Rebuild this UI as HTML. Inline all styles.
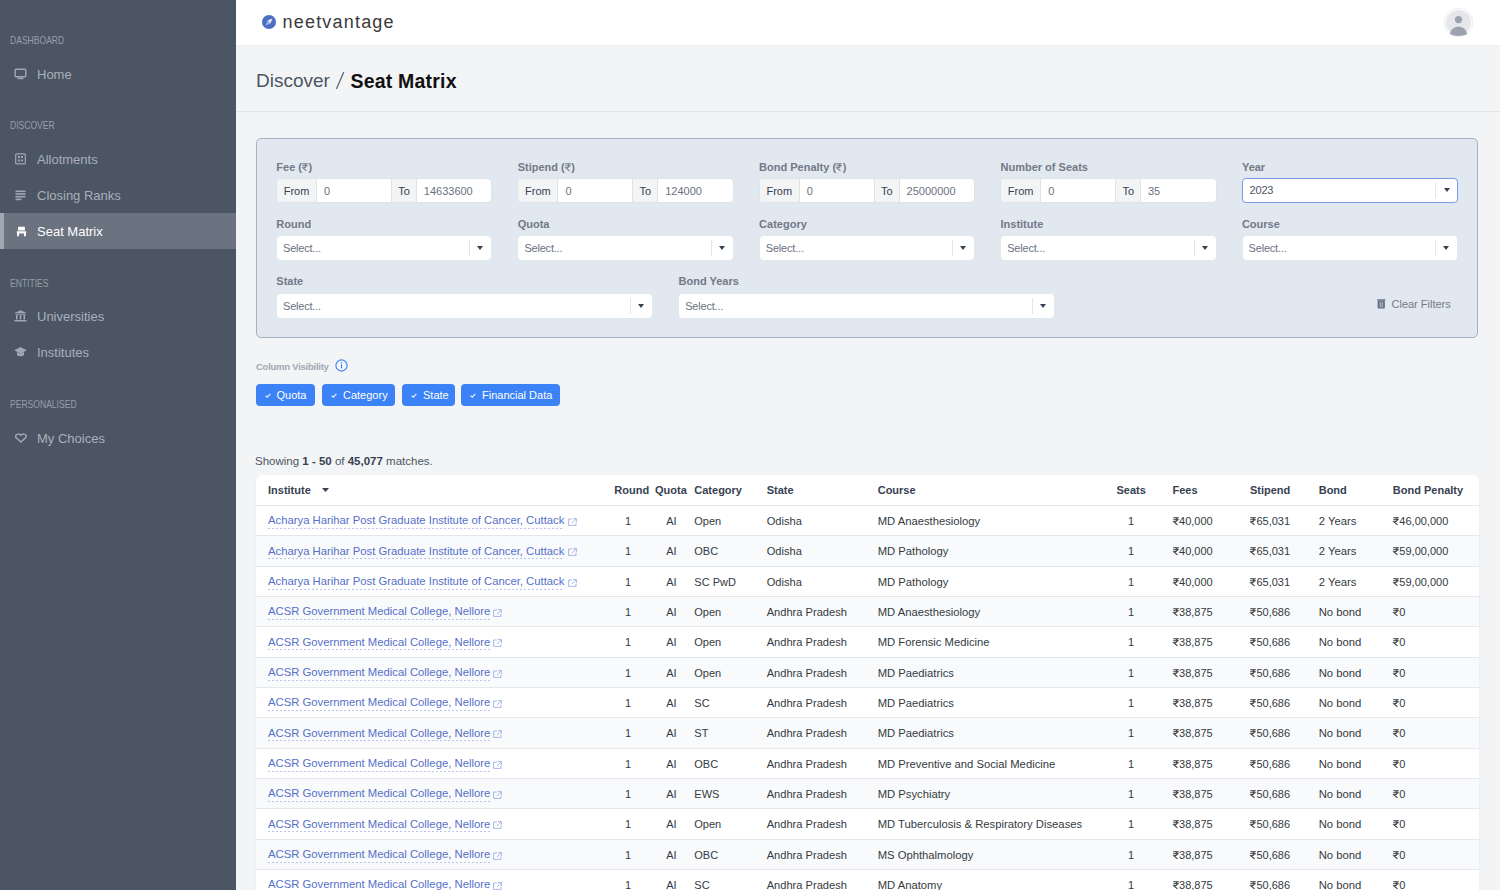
<!DOCTYPE html>
<html><head><meta charset="utf-8"><title>Seat Matrix</title>
<style>
*{box-sizing:border-box;margin:0;padding:0}
html,body{width:1500px;height:890px;overflow:hidden;background:#f3f4f6;font-family:"Liberation Sans",sans-serif;color:#1f2937}
.abs{position:absolute}
svg.r{display:inline-block;width:0.55em;height:0.72em;vertical-align:baseline;margin-right:0.5px;overflow:visible}
/* sidebar */
#sb{position:absolute;left:0;top:0;width:236px;height:890px;background:#4b5563}
.sec{position:absolute;left:9.7px;font-size:10.2px;letter-spacing:0px;transform:scaleX(0.84);transform-origin:0 0;white-space:nowrap;color:#979eaa;line-height:12px;height:12px}
.it{position:absolute;left:0;width:236px;height:36px;color:#a9b0bb;font-size:13px;line-height:36px}
.it .tx{position:absolute;left:37px;top:0.7px}
.it svg{position:absolute;left:14px;top:12px;width:13px;height:12px;color:#a0a8b3}
.it.act svg{color:#fff}
.it.act{background:#6b7280;color:#fff}
.it.act:before{content:"";position:absolute;left:0;top:0;width:4px;height:36px;background:#a1a8b3}
/* header */
#hd{position:absolute;left:236px;top:0;width:1264px;height:45px;background:#fff;box-shadow:0 1px 2px rgba(0,0,0,.035)}
#bc{position:absolute;left:236px;top:45px;width:1264px;height:67px;border-bottom:1px solid #e3e5e9}
/* panel */
#pn{position:absolute;left:256px;top:138px;width:1222px;height:200px;background:#e2e8f0;border:1px solid #a6b1c1;border-radius:5px}
.lb{position:absolute;font-size:11px;font-weight:bold;color:#717a88;line-height:13px;margin-left:-0.7px}
.ig{position:absolute;height:23.5px;background:#fff;border-radius:4px;box-shadow:0 0 0 0.5px #d9dee5;overflow:hidden;font-size:11px;line-height:24.6px;color:#6b7280}
.ig .ad{position:absolute;top:0;height:23.5px;background:#f3f4f6;color:#374151;text-align:center;border-left:1px solid #dfe2e6;border-right:1px solid #dfe2e6}
.ig .v{position:absolute;top:0}
.sel{position:absolute;height:24px;background:#fff;border-radius:4px;font-size:11px;line-height:24px;color:#6b7280}
.sel .ph{position:absolute;left:6px;top:0.3px;letter-spacing:-0.2px}
.sel .sp{position:absolute;right:21px;top:4px;width:1px;height:16px;background:#e5e7eb}
.sel .ar{position:absolute;right:8px;top:10px;width:0;height:0;border-left:3.5px solid transparent;border-right:3.5px solid transparent;border-top:4px solid #374151}
/* buttons */
.btn{position:absolute;top:384px;height:22px;background:#3b82f6;border-radius:4px;color:#fff;font-size:11px;line-height:22px}
/* table */
#tb{position:absolute;left:256px;top:475px;width:1223px;height:430px;background:#fff;border-radius:6px 6px 0 0;overflow:hidden;box-shadow:0 1px 3px rgba(0,0,0,.05)}
.row{position:absolute;left:0;width:1223px;height:30.333px;font-size:11px;color:#343a42;border-bottom:1px solid #e5e7eb}
.row.alt{background:#f9fafb}
.row span{position:absolute;top:0;line-height:30.8px;white-space:nowrap}
.hdr span{font-weight:bold;color:#374151;top:0.3px}
.row .lk{color:#5570c8;font-size:11.3px;top:-0.6px}
.row .lk u{text-decoration:none;line-height:13.5px;display:inline-block;padding-bottom:1px;background:linear-gradient(to right,#b9c5ec 45%,transparent 45%) 0 100%/4px 1px repeat-x}
.c{text-align:center}

svg.ext{display:inline-block;vertical-align:-1.5px;margin-left:0px}
</style></head>
<body>
<div id="sb">
<div class="sec" style="top:35.1px">DASHBOARD</div>
<div class="sec" style="top:120.1px">DISCOVER</div>
<div class="sec" style="top:277.9px">ENTITIES</div>
<div class="sec" style="top:399.2px">PERSONALISED</div>
<div class="it" style="top:56px"><svg viewBox="0 0 13 12"><rect x="1.2" y="1.2" width="10.6" height="7.6" rx="1" fill="none" stroke="currentColor" stroke-width="1.4"/><rect x="3.5" y="9.6" width="6" height="1.6" fill="currentColor"/></svg><span class="tx">Home</span></div>
<div class="it" style="top:141px"><svg viewBox="0 0 13 12"><rect x="1.7" y="0.9" width="9.6" height="10" rx="1" fill="none" stroke="currentColor" stroke-width="1.2"/><rect x="4" y="3" width="2" height="2" fill="currentColor"/><rect x="7" y="3" width="2" height="2" fill="currentColor"/><rect x="4" y="6.5" width="2" height="2" fill="currentColor"/><rect x="7" y="6.5" width="2" height="2" fill="currentColor"/></svg><span class="tx">Allotments</span></div>
<div class="it" style="top:177px"><svg viewBox="0 0 13 12"><rect x="1.5" y="1.5" width="10" height="1.6" fill="currentColor"/><rect x="1.5" y="4.2" width="10" height="1.6" fill="currentColor"/><rect x="1.5" y="6.9" width="10" height="1.6" fill="currentColor"/><rect x="1.5" y="9.6" width="6" height="1.6" fill="currentColor"/></svg><span class="tx">Closing Ranks</span></div>
<div class="it act" style="top:213px"><svg viewBox="0 0 13 12" style="left:15.5px;top:13px;width:11px;height:11px"><path d="M3.2 0.3H9.8Q10.6 0.3 10.6 1.1V4.8H2.4V1.1Q2.4 0.3 3.2 0.3Z M1 5.6H12V8.4H1Z M1.3 8.4H3.6V11.6H1.3Z M9.4 8.4H11.7V11.6H9.4Z" fill="currentColor"/></svg><span class="tx">Seat Matrix</span></div>
<div class="it" style="top:298px"><svg viewBox="0 0 13 12"><path d="M6.5 0.3L12.5 3H0.5Z" fill="currentColor"/><rect x="1" y="3.6" width="11" height="1" fill="currentColor"/><rect x="2" y="5" width="1.5" height="4.5" fill="currentColor"/><rect x="5.75" y="5" width="1.5" height="4.5" fill="currentColor"/><rect x="9.5" y="5" width="1.5" height="4.5" fill="currentColor"/><rect x="0.5" y="10" width="12" height="1.5" fill="currentColor"/></svg><span class="tx">Universities</span></div>
<div class="it" style="top:334px"><svg viewBox="0 0 13 12"><path d="M6.5 1L12.8 4.2L6.5 7.4L0.2 4.2Z" fill="currentColor"/><path d="M3 6V9C4.5 10.8 8.5 10.8 10 9V6L6.5 7.8Z" fill="currentColor"/></svg><span class="tx">Institutes</span></div>
<div class="it" style="top:420px"><svg viewBox="0 0 13 12" preserveAspectRatio="none" style="left:15px;top:13px;width:11.8px;height:10px"><path d="M6.5 10.8L1.6 6C0 4.4 0.6 1.5 3.2 1.2C4.6 1 5.8 1.8 6.5 2.8C7.2 1.8 8.4 1 9.8 1.2C12.4 1.5 13 4.4 11.4 6Z" fill="none" stroke="currentColor" stroke-width="1.7"/></svg><span class="tx">My Choices</span></div>
</div>
<div id="hd"></div><svg class="abs" style="left:262px;top:15px" width="14" height="14" viewBox="0 0 14 14"><circle cx="7" cy="7" r="7" fill="#4a6fc4"/><path d="M10.5 3.5L8.4 8.4 5.6 5.6Z" fill="#eef3fb"/><path d="M3.5 10.5L5.6 5.6 8.4 8.4Z" fill="#9fb7e6"/></svg><div class="abs" style="left:282.5px;top:8.5px;font-size:18px;letter-spacing:1.2px;color:#3a3a3a;line-height:26px">neetvantage</div><svg class="abs" style="left:1443px;top:7px" width="30" height="30" viewBox="0 0 30 30"><circle cx="15.5" cy="15.5" r="14.3" fill="#fff" stroke="#e9ebee" stroke-width="0.9"/><circle cx="15.5" cy="15.5" r="12.6" fill="#e5e7eb"/><circle cx="15.5" cy="12.6" r="3.6" fill="#9ca3af"/><path d="M7 27C7.5 22.5 11 19.8 15.5 19.8S23.5 22.5 24 27C21.5 28.6 18.5 28.9 15.5 28.9S9.5 28.6 7 27Z" fill="#9ca3af"/></svg>
<div id="bc"></div><div class="abs" style="left:256px;top:68.5px;font-size:19px;line-height:24px;color:#4b5563;white-space:nowrap">Discover</div><svg class="abs" style="left:334px;top:71px" width="12" height="19" viewBox="0 0 12 19"><path d="M9.6 1.6L2.6 17.4" stroke="#5f6673" stroke-width="1.3" stroke-linecap="round"/></svg><div class="abs" style="left:350.5px;top:68.5px;font-size:19.5px;line-height:24px;color:#111;font-weight:bold;letter-spacing:0.2px;white-space:nowrap">Seat Matrix</div>
<div id="pn"></div>
<div class="lb" style="left:277px;top:160.6px">Fee (<svg class="r" viewBox="0 0 6 8"><path d="M0.2 0.7H5.8M0.2 2.8H5.8M1.6 0.7C5 0.7 5 4.7 1.6 4.7H0.7L4.5 7.9" fill="none" stroke="currentColor" stroke-width="1.05"/></svg>)</div>
<div class="ig" style="left:277px;top:178.8px;width:214.4px"><span class="ad" style="left:0;width:40px;border-left:0">From</span><span class="v" style="left:47px">0</span><span class="ad" style="left:114px;width:26px">To</span><span class="v" style="left:146.8px">14633600</span></div>
<div class="lb" style="left:518.4px;top:160.6px">Stipend (<svg class="r" viewBox="0 0 6 8"><path d="M0.2 0.7H5.8M0.2 2.8H5.8M1.6 0.7C5 0.7 5 4.7 1.6 4.7H0.7L4.5 7.9" fill="none" stroke="currentColor" stroke-width="1.05"/></svg>)</div>
<div class="ig" style="left:518.4px;top:178.8px;width:214.4px"><span class="ad" style="left:0;width:40px;border-left:0">From</span><span class="v" style="left:47px">0</span><span class="ad" style="left:114px;width:26px">To</span><span class="v" style="left:146.8px">124000</span></div>
<div class="lb" style="left:759.8px;top:160.6px">Bond Penalty (<svg class="r" viewBox="0 0 6 8"><path d="M0.2 0.7H5.8M0.2 2.8H5.8M1.6 0.7C5 0.7 5 4.7 1.6 4.7H0.7L4.5 7.9" fill="none" stroke="currentColor" stroke-width="1.05"/></svg>)</div>
<div class="ig" style="left:759.8px;top:178.8px;width:214.4px"><span class="ad" style="left:0;width:40px;border-left:0">From</span><span class="v" style="left:47px">0</span><span class="ad" style="left:114px;width:26px">To</span><span class="v" style="left:146.8px">25000000</span></div>
<div class="lb" style="left:1001.2px;top:160.6px">Number of Seats</div>
<div class="ig" style="left:1001.2px;top:178.8px;width:214.4px"><span class="ad" style="left:0;width:40px;border-left:0">From</span><span class="v" style="left:47px">0</span><span class="ad" style="left:114px;width:26px">To</span><span class="v" style="left:146.8px">35</span></div>
<div class="lb" style="left:1242.6px;top:160.6px">Year</div>
<div class="sel" style="left:1241.8px;top:177.8px;width:216.0px;height:24.8px;border:1px solid #7c9ee0;box-shadow:0 0 0 0.6px #d3e0f5"><span class="ph" style="left:6.8px;top:-0.5px;color:#4b5563">2023</span><span class="sp" style="top:3.5px"></span><span class="ar" style="top:9.6px;right:7.2px"></span></div>
<div class="lb" style="left:277px;top:217.9px">Round</div>
<div class="sel" style="left:277px;top:236px;width:214.4px"><span class="ph">Select...</span><span class="sp"></span><span class="ar"></span></div>
<div class="lb" style="left:518.4px;top:217.9px">Quota</div>
<div class="sel" style="left:518.4px;top:236px;width:214.4px"><span class="ph">Select...</span><span class="sp"></span><span class="ar"></span></div>
<div class="lb" style="left:759.8px;top:217.9px">Category</div>
<div class="sel" style="left:759.8px;top:236px;width:214.4px"><span class="ph">Select...</span><span class="sp"></span><span class="ar"></span></div>
<div class="lb" style="left:1001.2px;top:217.9px">Institute</div>
<div class="sel" style="left:1001.2px;top:236px;width:214.4px"><span class="ph">Select...</span><span class="sp"></span><span class="ar"></span></div>
<div class="lb" style="left:1242.6px;top:217.9px">Course</div>
<div class="sel" style="left:1242.6px;top:236px;width:214.4px"><span class="ph">Select...</span><span class="sp"></span><span class="ar"></span></div>
<div class="lb" style="left:277px;top:275.4px">State</div>
<div class="sel" style="left:277px;top:294px;width:374.8px"><span class="ph">Select...</span><span class="sp"></span><span class="ar"></span></div>
<div class="lb" style="left:679.2px;top:275.4px">Bond Years</div>
<div class="sel" style="left:679.2px;top:294px;width:374.8px"><span class="ph">Select...</span><span class="sp"></span><span class="ar"></span></div>
<svg class="abs" style="left:1377px;top:299px" width="9" height="10" viewBox="0 0 9 10"><rect x="0" y="0.3" width="8.5" height="1.4" rx="0.4" fill="#687385"/><rect x="0.6" y="2" width="7.3" height="7.6" rx="0.8" fill="#687385"/><rect x="2.8" y="3.2" width="0.9" height="5" fill="#c9d1dc"/><rect x="4.8" y="3.2" width="0.9" height="5" fill="#c9d1dc"/></svg>
<div class="abs" style="left:1391.5px;top:297px;font-size:11px;line-height:14px;color:#737b89">Clear Filters</div>
<div class="abs" style="left:256px;top:360.5px;font-size:9.5px;font-weight:bold;color:#a2a8b2;line-height:12px;letter-spacing:-0.25px">Column Visibility</div>
<svg class="abs" style="left:335px;top:359px" width="13" height="13" viewBox="0 0 13 13"><circle cx="6.5" cy="6.5" r="5.6" fill="none" stroke="#3b82f6" stroke-width="1.1"/><rect x="5.95" y="5.3" width="1.1" height="4" fill="#3b82f6"/><circle cx="6.5" cy="3.8" r="0.7" fill="#3b82f6"/></svg>
<div class="btn" style="left:255.5px;width:59.5px"><svg class="abs" style="left:9px;top:8.5px" width="6" height="5" viewBox="0 0 6 5"><path d="M0.6 2.6L2.2 4.1L5.4 0.8" fill="none" stroke="#e9f2ff" stroke-width="1.2"/></svg><span class="abs" style="left:21px;top:0">Quota</span></div>
<div class="btn" style="left:322px;width:73px"><svg class="abs" style="left:9px;top:8.5px" width="6" height="5" viewBox="0 0 6 5"><path d="M0.6 2.6L2.2 4.1L5.4 0.8" fill="none" stroke="#e9f2ff" stroke-width="1.2"/></svg><span class="abs" style="left:21px;top:0">Category</span></div>
<div class="btn" style="left:402px;width:52.5px"><svg class="abs" style="left:9px;top:8.5px" width="6" height="5" viewBox="0 0 6 5"><path d="M0.6 2.6L2.2 4.1L5.4 0.8" fill="none" stroke="#e9f2ff" stroke-width="1.2"/></svg><span class="abs" style="left:21px;top:0">State</span></div>
<div class="btn" style="left:461px;width:99px"><svg class="abs" style="left:9px;top:8.5px" width="6" height="5" viewBox="0 0 6 5"><path d="M0.6 2.6L2.2 4.1L5.4 0.8" fill="none" stroke="#e9f2ff" stroke-width="1.2"/></svg><span class="abs" style="left:21px;top:0">Financial Data</span></div>
<div class="abs" style="left:255px;top:453.5px;font-size:11.5px;line-height:14px;color:#4b5563">Showing <b style="color:#374151">1 - 50</b> of <b style="color:#374151">45,077</b> matches.</div>
<div id="tb">
<div class="row hdr" style="top:0;height:31px"><span style="left:12px">Institute</span><svg class="abs" style="left:66px;top:12.8px" width="7" height="4" viewBox="0 0 7 4"><path d="M0 0H7L3.5 4Z" fill="#374151"/></svg><span style="left:358.29999999999995px">Round</span><span style="left:399px">Quota</span><span style="left:438.29999999999995px">Category</span><span style="left:510.70000000000005px">State</span><span style="left:621.7px">Course</span><span style="left:860.5px">Seats</span><span style="left:916.5px">Fees</span><span style="left:993.9000000000001px">Stipend</span><span style="left:1062.7px">Bond</span><span style="left:1136.8px">Bond Penalty</span></div>
<div class="row" style="top:31.000px"><span class="lk" style="left:12px"><u>Acharya Harihar Post Graduate Institute of Cancer, Cuttack</u> <svg class="ext" viewBox="0 0 9 8" width="9" height="8"><path d="M5 0.6H8.4V4M8.2 0.8L4 5M4 1H0.6V7.4H8V4.6" fill="none" stroke="#9db0e6" stroke-width="0.9"/></svg></span><span class="c" style="left:362px;width:20px">1</span><span class="c" style="left:405.4px;width:20px">AI</span><span style="left:438.29999999999995px">Open</span><span style="left:510.70000000000005px;font-size:11.1px">Odisha</span><span style="left:621.7px;font-size:11.25px">MD Anaesthesiology</span><span class="c" style="left:865px;width:20px">1</span><span style="left:916.5px"><svg class="r" viewBox="0 0 6 8"><path d="M0.2 0.7H5.8M0.2 2.8H5.8M1.6 0.7C5 0.7 5 4.7 1.6 4.7H0.7L4.5 7.9" fill="none" stroke="currentColor" stroke-width="1.05"/></svg>40,000</span><span style="left:993.9000000000001px"><svg class="r" viewBox="0 0 6 8"><path d="M0.2 0.7H5.8M0.2 2.8H5.8M1.6 0.7C5 0.7 5 4.7 1.6 4.7H0.7L4.5 7.9" fill="none" stroke="currentColor" stroke-width="1.05"/></svg>65,031</span><span style="left:1062.7px;font-size:11.3px">2 Years</span><span style="left:1136.8px"><svg class="r" viewBox="0 0 6 8"><path d="M0.2 0.7H5.8M0.2 2.8H5.8M1.6 0.7C5 0.7 5 4.7 1.6 4.7H0.7L4.5 7.9" fill="none" stroke="currentColor" stroke-width="1.05"/></svg>46,00,000</span></div>
<div class="row alt" style="top:61.333px"><span class="lk" style="left:12px"><u>Acharya Harihar Post Graduate Institute of Cancer, Cuttack</u> <svg class="ext" viewBox="0 0 9 8" width="9" height="8"><path d="M5 0.6H8.4V4M8.2 0.8L4 5M4 1H0.6V7.4H8V4.6" fill="none" stroke="#9db0e6" stroke-width="0.9"/></svg></span><span class="c" style="left:362px;width:20px">1</span><span class="c" style="left:405.4px;width:20px">AI</span><span style="left:438.29999999999995px">OBC</span><span style="left:510.70000000000005px;font-size:11.1px">Odisha</span><span style="left:621.7px;font-size:11.25px">MD Pathology</span><span class="c" style="left:865px;width:20px">1</span><span style="left:916.5px"><svg class="r" viewBox="0 0 6 8"><path d="M0.2 0.7H5.8M0.2 2.8H5.8M1.6 0.7C5 0.7 5 4.7 1.6 4.7H0.7L4.5 7.9" fill="none" stroke="currentColor" stroke-width="1.05"/></svg>40,000</span><span style="left:993.9000000000001px"><svg class="r" viewBox="0 0 6 8"><path d="M0.2 0.7H5.8M0.2 2.8H5.8M1.6 0.7C5 0.7 5 4.7 1.6 4.7H0.7L4.5 7.9" fill="none" stroke="currentColor" stroke-width="1.05"/></svg>65,031</span><span style="left:1062.7px;font-size:11.3px">2 Years</span><span style="left:1136.8px"><svg class="r" viewBox="0 0 6 8"><path d="M0.2 0.7H5.8M0.2 2.8H5.8M1.6 0.7C5 0.7 5 4.7 1.6 4.7H0.7L4.5 7.9" fill="none" stroke="currentColor" stroke-width="1.05"/></svg>59,00,000</span></div>
<div class="row" style="top:91.666px"><span class="lk" style="left:12px"><u>Acharya Harihar Post Graduate Institute of Cancer, Cuttack</u> <svg class="ext" viewBox="0 0 9 8" width="9" height="8"><path d="M5 0.6H8.4V4M8.2 0.8L4 5M4 1H0.6V7.4H8V4.6" fill="none" stroke="#9db0e6" stroke-width="0.9"/></svg></span><span class="c" style="left:362px;width:20px">1</span><span class="c" style="left:405.4px;width:20px">AI</span><span style="left:438.29999999999995px">SC PwD</span><span style="left:510.70000000000005px;font-size:11.1px">Odisha</span><span style="left:621.7px;font-size:11.25px">MD Pathology</span><span class="c" style="left:865px;width:20px">1</span><span style="left:916.5px"><svg class="r" viewBox="0 0 6 8"><path d="M0.2 0.7H5.8M0.2 2.8H5.8M1.6 0.7C5 0.7 5 4.7 1.6 4.7H0.7L4.5 7.9" fill="none" stroke="currentColor" stroke-width="1.05"/></svg>40,000</span><span style="left:993.9000000000001px"><svg class="r" viewBox="0 0 6 8"><path d="M0.2 0.7H5.8M0.2 2.8H5.8M1.6 0.7C5 0.7 5 4.7 1.6 4.7H0.7L4.5 7.9" fill="none" stroke="currentColor" stroke-width="1.05"/></svg>65,031</span><span style="left:1062.7px;font-size:11.3px">2 Years</span><span style="left:1136.8px"><svg class="r" viewBox="0 0 6 8"><path d="M0.2 0.7H5.8M0.2 2.8H5.8M1.6 0.7C5 0.7 5 4.7 1.6 4.7H0.7L4.5 7.9" fill="none" stroke="currentColor" stroke-width="1.05"/></svg>59,00,000</span></div>
<div class="row alt" style="top:121.999px"><span class="lk" style="left:12px"><u>ACSR Government Medical College, Nellore</u> <svg class="ext" viewBox="0 0 9 8" width="9" height="8"><path d="M5 0.6H8.4V4M8.2 0.8L4 5M4 1H0.6V7.4H8V4.6" fill="none" stroke="#9db0e6" stroke-width="0.9"/></svg></span><span class="c" style="left:362px;width:20px">1</span><span class="c" style="left:405.4px;width:20px">AI</span><span style="left:438.29999999999995px">Open</span><span style="left:510.70000000000005px;font-size:11.1px">Andhra Pradesh</span><span style="left:621.7px;font-size:11.25px">MD Anaesthesiology</span><span class="c" style="left:865px;width:20px">1</span><span style="left:916.5px"><svg class="r" viewBox="0 0 6 8"><path d="M0.2 0.7H5.8M0.2 2.8H5.8M1.6 0.7C5 0.7 5 4.7 1.6 4.7H0.7L4.5 7.9" fill="none" stroke="currentColor" stroke-width="1.05"/></svg>38,875</span><span style="left:993.9000000000001px"><svg class="r" viewBox="0 0 6 8"><path d="M0.2 0.7H5.8M0.2 2.8H5.8M1.6 0.7C5 0.7 5 4.7 1.6 4.7H0.7L4.5 7.9" fill="none" stroke="currentColor" stroke-width="1.05"/></svg>50,686</span><span style="left:1062.7px;font-size:11.3px">No bond</span><span style="left:1136.8px"><svg class="r" viewBox="0 0 6 8"><path d="M0.2 0.7H5.8M0.2 2.8H5.8M1.6 0.7C5 0.7 5 4.7 1.6 4.7H0.7L4.5 7.9" fill="none" stroke="currentColor" stroke-width="1.05"/></svg>0</span></div>
<div class="row" style="top:152.332px"><span class="lk" style="left:12px"><u>ACSR Government Medical College, Nellore</u> <svg class="ext" viewBox="0 0 9 8" width="9" height="8"><path d="M5 0.6H8.4V4M8.2 0.8L4 5M4 1H0.6V7.4H8V4.6" fill="none" stroke="#9db0e6" stroke-width="0.9"/></svg></span><span class="c" style="left:362px;width:20px">1</span><span class="c" style="left:405.4px;width:20px">AI</span><span style="left:438.29999999999995px">Open</span><span style="left:510.70000000000005px;font-size:11.1px">Andhra Pradesh</span><span style="left:621.7px;font-size:11.25px">MD Forensic Medicine</span><span class="c" style="left:865px;width:20px">1</span><span style="left:916.5px"><svg class="r" viewBox="0 0 6 8"><path d="M0.2 0.7H5.8M0.2 2.8H5.8M1.6 0.7C5 0.7 5 4.7 1.6 4.7H0.7L4.5 7.9" fill="none" stroke="currentColor" stroke-width="1.05"/></svg>38,875</span><span style="left:993.9000000000001px"><svg class="r" viewBox="0 0 6 8"><path d="M0.2 0.7H5.8M0.2 2.8H5.8M1.6 0.7C5 0.7 5 4.7 1.6 4.7H0.7L4.5 7.9" fill="none" stroke="currentColor" stroke-width="1.05"/></svg>50,686</span><span style="left:1062.7px;font-size:11.3px">No bond</span><span style="left:1136.8px"><svg class="r" viewBox="0 0 6 8"><path d="M0.2 0.7H5.8M0.2 2.8H5.8M1.6 0.7C5 0.7 5 4.7 1.6 4.7H0.7L4.5 7.9" fill="none" stroke="currentColor" stroke-width="1.05"/></svg>0</span></div>
<div class="row alt" style="top:182.665px"><span class="lk" style="left:12px"><u>ACSR Government Medical College, Nellore</u> <svg class="ext" viewBox="0 0 9 8" width="9" height="8"><path d="M5 0.6H8.4V4M8.2 0.8L4 5M4 1H0.6V7.4H8V4.6" fill="none" stroke="#9db0e6" stroke-width="0.9"/></svg></span><span class="c" style="left:362px;width:20px">1</span><span class="c" style="left:405.4px;width:20px">AI</span><span style="left:438.29999999999995px">Open</span><span style="left:510.70000000000005px;font-size:11.1px">Andhra Pradesh</span><span style="left:621.7px;font-size:11.25px">MD Paediatrics</span><span class="c" style="left:865px;width:20px">1</span><span style="left:916.5px"><svg class="r" viewBox="0 0 6 8"><path d="M0.2 0.7H5.8M0.2 2.8H5.8M1.6 0.7C5 0.7 5 4.7 1.6 4.7H0.7L4.5 7.9" fill="none" stroke="currentColor" stroke-width="1.05"/></svg>38,875</span><span style="left:993.9000000000001px"><svg class="r" viewBox="0 0 6 8"><path d="M0.2 0.7H5.8M0.2 2.8H5.8M1.6 0.7C5 0.7 5 4.7 1.6 4.7H0.7L4.5 7.9" fill="none" stroke="currentColor" stroke-width="1.05"/></svg>50,686</span><span style="left:1062.7px;font-size:11.3px">No bond</span><span style="left:1136.8px"><svg class="r" viewBox="0 0 6 8"><path d="M0.2 0.7H5.8M0.2 2.8H5.8M1.6 0.7C5 0.7 5 4.7 1.6 4.7H0.7L4.5 7.9" fill="none" stroke="currentColor" stroke-width="1.05"/></svg>0</span></div>
<div class="row" style="top:212.998px"><span class="lk" style="left:12px"><u>ACSR Government Medical College, Nellore</u> <svg class="ext" viewBox="0 0 9 8" width="9" height="8"><path d="M5 0.6H8.4V4M8.2 0.8L4 5M4 1H0.6V7.4H8V4.6" fill="none" stroke="#9db0e6" stroke-width="0.9"/></svg></span><span class="c" style="left:362px;width:20px">1</span><span class="c" style="left:405.4px;width:20px">AI</span><span style="left:438.29999999999995px">SC</span><span style="left:510.70000000000005px;font-size:11.1px">Andhra Pradesh</span><span style="left:621.7px;font-size:11.25px">MD Paediatrics</span><span class="c" style="left:865px;width:20px">1</span><span style="left:916.5px"><svg class="r" viewBox="0 0 6 8"><path d="M0.2 0.7H5.8M0.2 2.8H5.8M1.6 0.7C5 0.7 5 4.7 1.6 4.7H0.7L4.5 7.9" fill="none" stroke="currentColor" stroke-width="1.05"/></svg>38,875</span><span style="left:993.9000000000001px"><svg class="r" viewBox="0 0 6 8"><path d="M0.2 0.7H5.8M0.2 2.8H5.8M1.6 0.7C5 0.7 5 4.7 1.6 4.7H0.7L4.5 7.9" fill="none" stroke="currentColor" stroke-width="1.05"/></svg>50,686</span><span style="left:1062.7px;font-size:11.3px">No bond</span><span style="left:1136.8px"><svg class="r" viewBox="0 0 6 8"><path d="M0.2 0.7H5.8M0.2 2.8H5.8M1.6 0.7C5 0.7 5 4.7 1.6 4.7H0.7L4.5 7.9" fill="none" stroke="currentColor" stroke-width="1.05"/></svg>0</span></div>
<div class="row alt" style="top:243.331px"><span class="lk" style="left:12px"><u>ACSR Government Medical College, Nellore</u> <svg class="ext" viewBox="0 0 9 8" width="9" height="8"><path d="M5 0.6H8.4V4M8.2 0.8L4 5M4 1H0.6V7.4H8V4.6" fill="none" stroke="#9db0e6" stroke-width="0.9"/></svg></span><span class="c" style="left:362px;width:20px">1</span><span class="c" style="left:405.4px;width:20px">AI</span><span style="left:438.29999999999995px">ST</span><span style="left:510.70000000000005px;font-size:11.1px">Andhra Pradesh</span><span style="left:621.7px;font-size:11.25px">MD Paediatrics</span><span class="c" style="left:865px;width:20px">1</span><span style="left:916.5px"><svg class="r" viewBox="0 0 6 8"><path d="M0.2 0.7H5.8M0.2 2.8H5.8M1.6 0.7C5 0.7 5 4.7 1.6 4.7H0.7L4.5 7.9" fill="none" stroke="currentColor" stroke-width="1.05"/></svg>38,875</span><span style="left:993.9000000000001px"><svg class="r" viewBox="0 0 6 8"><path d="M0.2 0.7H5.8M0.2 2.8H5.8M1.6 0.7C5 0.7 5 4.7 1.6 4.7H0.7L4.5 7.9" fill="none" stroke="currentColor" stroke-width="1.05"/></svg>50,686</span><span style="left:1062.7px;font-size:11.3px">No bond</span><span style="left:1136.8px"><svg class="r" viewBox="0 0 6 8"><path d="M0.2 0.7H5.8M0.2 2.8H5.8M1.6 0.7C5 0.7 5 4.7 1.6 4.7H0.7L4.5 7.9" fill="none" stroke="currentColor" stroke-width="1.05"/></svg>0</span></div>
<div class="row" style="top:273.664px"><span class="lk" style="left:12px"><u>ACSR Government Medical College, Nellore</u> <svg class="ext" viewBox="0 0 9 8" width="9" height="8"><path d="M5 0.6H8.4V4M8.2 0.8L4 5M4 1H0.6V7.4H8V4.6" fill="none" stroke="#9db0e6" stroke-width="0.9"/></svg></span><span class="c" style="left:362px;width:20px">1</span><span class="c" style="left:405.4px;width:20px">AI</span><span style="left:438.29999999999995px">OBC</span><span style="left:510.70000000000005px;font-size:11.1px">Andhra Pradesh</span><span style="left:621.7px;font-size:11.25px">MD Preventive and Social Medicine</span><span class="c" style="left:865px;width:20px">1</span><span style="left:916.5px"><svg class="r" viewBox="0 0 6 8"><path d="M0.2 0.7H5.8M0.2 2.8H5.8M1.6 0.7C5 0.7 5 4.7 1.6 4.7H0.7L4.5 7.9" fill="none" stroke="currentColor" stroke-width="1.05"/></svg>38,875</span><span style="left:993.9000000000001px"><svg class="r" viewBox="0 0 6 8"><path d="M0.2 0.7H5.8M0.2 2.8H5.8M1.6 0.7C5 0.7 5 4.7 1.6 4.7H0.7L4.5 7.9" fill="none" stroke="currentColor" stroke-width="1.05"/></svg>50,686</span><span style="left:1062.7px;font-size:11.3px">No bond</span><span style="left:1136.8px"><svg class="r" viewBox="0 0 6 8"><path d="M0.2 0.7H5.8M0.2 2.8H5.8M1.6 0.7C5 0.7 5 4.7 1.6 4.7H0.7L4.5 7.9" fill="none" stroke="currentColor" stroke-width="1.05"/></svg>0</span></div>
<div class="row alt" style="top:303.997px"><span class="lk" style="left:12px"><u>ACSR Government Medical College, Nellore</u> <svg class="ext" viewBox="0 0 9 8" width="9" height="8"><path d="M5 0.6H8.4V4M8.2 0.8L4 5M4 1H0.6V7.4H8V4.6" fill="none" stroke="#9db0e6" stroke-width="0.9"/></svg></span><span class="c" style="left:362px;width:20px">1</span><span class="c" style="left:405.4px;width:20px">AI</span><span style="left:438.29999999999995px">EWS</span><span style="left:510.70000000000005px;font-size:11.1px">Andhra Pradesh</span><span style="left:621.7px;font-size:11.25px">MD Psychiatry</span><span class="c" style="left:865px;width:20px">1</span><span style="left:916.5px"><svg class="r" viewBox="0 0 6 8"><path d="M0.2 0.7H5.8M0.2 2.8H5.8M1.6 0.7C5 0.7 5 4.7 1.6 4.7H0.7L4.5 7.9" fill="none" stroke="currentColor" stroke-width="1.05"/></svg>38,875</span><span style="left:993.9000000000001px"><svg class="r" viewBox="0 0 6 8"><path d="M0.2 0.7H5.8M0.2 2.8H5.8M1.6 0.7C5 0.7 5 4.7 1.6 4.7H0.7L4.5 7.9" fill="none" stroke="currentColor" stroke-width="1.05"/></svg>50,686</span><span style="left:1062.7px;font-size:11.3px">No bond</span><span style="left:1136.8px"><svg class="r" viewBox="0 0 6 8"><path d="M0.2 0.7H5.8M0.2 2.8H5.8M1.6 0.7C5 0.7 5 4.7 1.6 4.7H0.7L4.5 7.9" fill="none" stroke="currentColor" stroke-width="1.05"/></svg>0</span></div>
<div class="row" style="top:334.330px"><span class="lk" style="left:12px"><u>ACSR Government Medical College, Nellore</u> <svg class="ext" viewBox="0 0 9 8" width="9" height="8"><path d="M5 0.6H8.4V4M8.2 0.8L4 5M4 1H0.6V7.4H8V4.6" fill="none" stroke="#9db0e6" stroke-width="0.9"/></svg></span><span class="c" style="left:362px;width:20px">1</span><span class="c" style="left:405.4px;width:20px">AI</span><span style="left:438.29999999999995px">Open</span><span style="left:510.70000000000005px;font-size:11.1px">Andhra Pradesh</span><span style="left:621.7px;font-size:11.25px">MD Tuberculosis &amp; Respiratory Diseases</span><span class="c" style="left:865px;width:20px">1</span><span style="left:916.5px"><svg class="r" viewBox="0 0 6 8"><path d="M0.2 0.7H5.8M0.2 2.8H5.8M1.6 0.7C5 0.7 5 4.7 1.6 4.7H0.7L4.5 7.9" fill="none" stroke="currentColor" stroke-width="1.05"/></svg>38,875</span><span style="left:993.9000000000001px"><svg class="r" viewBox="0 0 6 8"><path d="M0.2 0.7H5.8M0.2 2.8H5.8M1.6 0.7C5 0.7 5 4.7 1.6 4.7H0.7L4.5 7.9" fill="none" stroke="currentColor" stroke-width="1.05"/></svg>50,686</span><span style="left:1062.7px;font-size:11.3px">No bond</span><span style="left:1136.8px"><svg class="r" viewBox="0 0 6 8"><path d="M0.2 0.7H5.8M0.2 2.8H5.8M1.6 0.7C5 0.7 5 4.7 1.6 4.7H0.7L4.5 7.9" fill="none" stroke="currentColor" stroke-width="1.05"/></svg>0</span></div>
<div class="row alt" style="top:364.663px"><span class="lk" style="left:12px"><u>ACSR Government Medical College, Nellore</u> <svg class="ext" viewBox="0 0 9 8" width="9" height="8"><path d="M5 0.6H8.4V4M8.2 0.8L4 5M4 1H0.6V7.4H8V4.6" fill="none" stroke="#9db0e6" stroke-width="0.9"/></svg></span><span class="c" style="left:362px;width:20px">1</span><span class="c" style="left:405.4px;width:20px">AI</span><span style="left:438.29999999999995px">OBC</span><span style="left:510.70000000000005px;font-size:11.1px">Andhra Pradesh</span><span style="left:621.7px;font-size:11.25px">MS Ophthalmology</span><span class="c" style="left:865px;width:20px">1</span><span style="left:916.5px"><svg class="r" viewBox="0 0 6 8"><path d="M0.2 0.7H5.8M0.2 2.8H5.8M1.6 0.7C5 0.7 5 4.7 1.6 4.7H0.7L4.5 7.9" fill="none" stroke="currentColor" stroke-width="1.05"/></svg>38,875</span><span style="left:993.9000000000001px"><svg class="r" viewBox="0 0 6 8"><path d="M0.2 0.7H5.8M0.2 2.8H5.8M1.6 0.7C5 0.7 5 4.7 1.6 4.7H0.7L4.5 7.9" fill="none" stroke="currentColor" stroke-width="1.05"/></svg>50,686</span><span style="left:1062.7px;font-size:11.3px">No bond</span><span style="left:1136.8px"><svg class="r" viewBox="0 0 6 8"><path d="M0.2 0.7H5.8M0.2 2.8H5.8M1.6 0.7C5 0.7 5 4.7 1.6 4.7H0.7L4.5 7.9" fill="none" stroke="currentColor" stroke-width="1.05"/></svg>0</span></div>
<div class="row" style="top:394.996px"><span class="lk" style="left:12px"><u>ACSR Government Medical College, Nellore</u> <svg class="ext" viewBox="0 0 9 8" width="9" height="8"><path d="M5 0.6H8.4V4M8.2 0.8L4 5M4 1H0.6V7.4H8V4.6" fill="none" stroke="#9db0e6" stroke-width="0.9"/></svg></span><span class="c" style="left:362px;width:20px">1</span><span class="c" style="left:405.4px;width:20px">AI</span><span style="left:438.29999999999995px">SC</span><span style="left:510.70000000000005px;font-size:11.1px">Andhra Pradesh</span><span style="left:621.7px;font-size:11.25px">MD Anatomy</span><span class="c" style="left:865px;width:20px">1</span><span style="left:916.5px"><svg class="r" viewBox="0 0 6 8"><path d="M0.2 0.7H5.8M0.2 2.8H5.8M1.6 0.7C5 0.7 5 4.7 1.6 4.7H0.7L4.5 7.9" fill="none" stroke="currentColor" stroke-width="1.05"/></svg>38,875</span><span style="left:993.9000000000001px"><svg class="r" viewBox="0 0 6 8"><path d="M0.2 0.7H5.8M0.2 2.8H5.8M1.6 0.7C5 0.7 5 4.7 1.6 4.7H0.7L4.5 7.9" fill="none" stroke="currentColor" stroke-width="1.05"/></svg>50,686</span><span style="left:1062.7px;font-size:11.3px">No bond</span><span style="left:1136.8px"><svg class="r" viewBox="0 0 6 8"><path d="M0.2 0.7H5.8M0.2 2.8H5.8M1.6 0.7C5 0.7 5 4.7 1.6 4.7H0.7L4.5 7.9" fill="none" stroke="currentColor" stroke-width="1.05"/></svg>0</span></div>
</div>
</body></html>
